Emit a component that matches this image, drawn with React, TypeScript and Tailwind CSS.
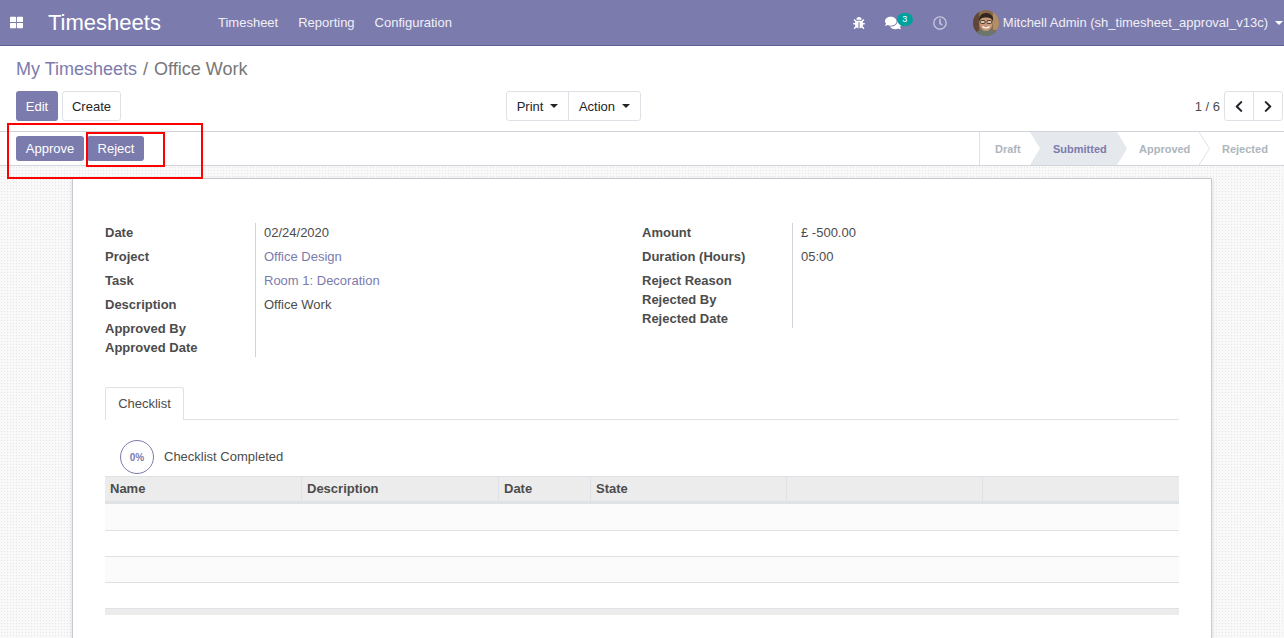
import React from "react";
import { FaBug, FaComments, FaThLarge, FaChevronLeft, FaChevronRight, FaRegClock } from "react-icons/fa";

const Avatar = () => (
  <svg width="26" height="26" viewBox="0 0 26 26" className="shrink-0">
    <defs>
      <clipPath id="av"><circle cx="13" cy="13" r="13" /></clipPath>
    </defs>
    <g clipPath="url(#av)">
      <rect width="26" height="26" fill="#8a6a4c" />
      <rect x="0" y="0" width="6" height="26" fill="#5f4636" />
      <rect x="20" y="0" width="6" height="20" fill="#b08f68" />
      <path d="M2 26c1-5 5-7 11-7s10 2 11 7z" fill="#6b766c" />
      <ellipse cx="13" cy="13.500" rx="6.500" ry="7.500" fill="#c99878" />
      <path d="M6 11c-.5-5 3-8 7-8s8 2.500 7 8c-1.500-2.500-3-3.500-7-3.500s-5.500 1-7 3.500z" fill="#33261f" />
      <rect x="7.500" y="10.500" width="4.500" height="3" rx="1" fill="#e2c3ae" stroke="#2c2420" strokeWidth="0.8" />
      <rect x="14" y="10.500" width="4.500" height="3" rx="1" fill="#e2c3ae" stroke="#2c2420" strokeWidth="0.8" />
      <path d="M9.500 16.500c2 1.800 5 1.800 7 0" stroke="#fff" strokeWidth="1.200" fill="none" />
    </g>
  </svg>
);

const Caret = ({ cls }: { cls: string }) => (
  <span className={`inline-block w-0 h-0 border-x-[4px] border-x-transparent border-t-[4px] ${cls}`} />
);

const Cols = ["w-[197px]", "w-[197px]", "w-[92px]", "w-[196px]", "w-[196px]", "flex-1"];

const leftLabels: [string, string][] = [
  ["Date", "h-[24px]"],
  ["Project", "h-[24px]"],
  ["Task", "h-[24px]"],
  ["Description", "h-[24px]"],
  ["Approved By", "h-[19px]"],
  ["Approved Date", "h-[19px]"],
];
const rightLabels: [string, string][] = [
  ["Amount", "h-[24px]"],
  ["Duration (Hours)", "h-[24px]"],
  ["Reject Reason", "h-[19px]"],
  ["Rejected By", "h-[19px]"],
  ["Rejected Date", "h-[19px]"],
];

export default function App() {
  return (
    <div className="relative w-[1284px] h-[638px] overflow-hidden bg-white text-[13px] text-[#4c4c4c] font-['Liberation_Sans',Arial,sans-serif]">
      {/* navbar */}
      <header className="h-[46px] bg-[#7c7bad] border-b border-[#5f5e97] flex items-center text-white">
        <FaThLarge className="ml-[10px] w-[13px] h-[13px]" />
        <div className="ml-[25px] text-[22px] leading-none w-[170px]">Timesheets</div>
        <nav className="flex gap-[20px] text-[#f0eff6]">
          <span>Timesheet</span>
          <span>Reporting</span>
          <span>Configuration</span>
        </nav>
        <div className="ml-auto flex items-center">
          <FaBug className="w-[12px] h-[12px] mr-[20px]" />
          <div className="relative mr-[32px]">
            <FaComments className="w-[16px] h-[16px]" />
            <span className="absolute left-[12px] -top-[2px] w-[16px] h-[13px] rounded-full bg-[#00a09d] text-[9px] leading-[13px] text-center">3</span>
          </div>
          <FaRegClock className="w-[14px] h-[14px] text-[#c9c8de] mr-[26px]" />
          <Avatar />
          <span className="ml-[4px] text-[#f0eff6]">Mitchell Admin (sh_timesheet_approval_v13c)</span>
          <Caret cls="ml-[7px] mr-[1px] border-t-white" />
        </div>
      </header>

      {/* control panel */}
      <div className="h-[85px] px-[16px] pt-[11px]">
        <div className="text-[18px] leading-[24px] text-[#777]">
          <span className="text-[#7c7bad]">My Timesheets</span>
          <span className="mx-[6px]">/</span>
          <span>Office Work</span>
        </div>
        <div className="mt-[10px] flex items-center">
          <div className="flex gap-[4px] w-[490px]">
            <button className="h-[30px] w-[42px] pt-[1px] rounded-[3px] bg-[#7c7bad] text-white">Edit</button>
            <button className="h-[30px] w-[59px] pt-[1px] rounded-[3px] bg-white border border-[#dee2e6] text-[#212529]">Create</button>
          </div>
          <div className="flex h-[30px] border border-[#dee2e6] rounded-[3px] text-[#212529]">
            <button className="w-[62px] pt-[1px] flex items-center justify-center gap-[7px] border-r border-[#dee2e6]">Print <Caret cls="mb-[2px] border-t-[#212529]" /></button>
            <button className="w-[71px] pt-[1px] flex items-center justify-center gap-[7px]">Action <Caret cls="mb-[2px] border-t-[#212529]" /></button>
          </div>
          <div className="flex flex-1 items-center justify-end -mr-[15px]">
            <span className="mr-[4px] pt-[1px] text-[#4c4c4c]">1 / 6</span>
            <div className="flex h-[30px] border border-[#dee2e6] rounded-[3px] text-[#212529]">
              <button className="w-[29px] flex items-center justify-center border-r border-[#dee2e6]"><FaChevronLeft className="w-[12px] h-[13px]" /></button>
              <button className="w-[28px] flex items-center justify-center"><FaChevronRight className="w-[12px] h-[13px]" /></button>
            </div>
          </div>
        </div>
      </div>

      {/* status bar */}
      <div className="h-[35px] border-y border-[#ced4da] flex items-center justify-between pl-[16px]">
        <div className="flex gap-[3px]">
          <button className="h-[25px] w-[68px] rounded-[3px] bg-[#7c7bad] text-white">Approve</button>
          <button className="h-[25px] w-[57px] pl-[1px] rounded-[3px] bg-[#7c7bad] text-white">Reject</button>
        </div>
        <div className="flex h-full text-[11px] font-bold text-[#adb5bd] border-l border-[#dee2e6]">
          <div className="w-[50px] pl-[15px] pt-[1px] flex items-center">Draft</div>
          <div className="relative w-[87px] pl-[23px] pt-[1px] flex items-center text-[#7c7bad]">
            <svg className="absolute left-0 top-0" width="97" height="33" viewBox="0 0 97 33">
              <path d="M0 0H87L97 16.500L87 33H0L10 16.500Z" fill="#e5e8ec" />
            </svg>
            <span className="relative">Submitted</span>
          </div>
          <div className="relative w-[82px] pl-[22px] pt-[1px] flex items-center">
            <svg className="absolute left-[82px] top-0" width="11" height="33" viewBox="0 0 11 33">
              <path d="M0 0L10.500 16.500L0 33" fill="none" stroke="#dee2e6" />
            </svg>
            <span className="relative">Approved</span>
          </div>
          <div className="w-[85px] pl-[23px] pt-[1px] flex items-center">Rejected</div>
        </div>
      </div>

      {/* content */}
      <main className="h-[472px] px-[72px] pt-[12px] bg-[#f9f9f9] bg-[radial-gradient(#e4e4e4_0.6px,transparent_0.6px)] bg-[length:3px_3px]">
        <div className="w-[1140px] h-[470px] bg-white border border-[#c8c8d0] shadow-[0_1px_4px_rgba(0,0,0,0.12)] pt-[44px] px-[32px]">
          <div className="flex">
            <div className="w-[537px] flex">
              <div className="w-[151px] border-r border-[#ced4da] font-bold leading-[19px]">
                {leftLabels.map(([t, h]) => <div key={t} className={h}>{t}</div>)}
              </div>
              <div className="pl-[8px] leading-[19px]">
                <div className="h-[24px]">02/24/2020</div>
                <div className="h-[24px] text-[#7c7bad]">Office Design</div>
                <div className="h-[24px] text-[#7c7bad]">Room 1: Decoration</div>
                <div className="h-[24px]">Office Work</div>
              </div>
            </div>
            <div className="flex self-start">
              <div className="w-[151px] border-r border-[#ced4da] font-bold leading-[19px]">
                {rightLabels.map(([t, h]) => <div key={t} className={h}>{t}</div>)}
              </div>
              <div className="pl-[8px] leading-[19px]">
                <div className="h-[24px]">£ -500.00</div>
                <div className="h-[24px]">05:00</div>
              </div>
            </div>
          </div>

          {/* tabs */}
          <div className="mt-[30px] h-[33px] border-b border-[#dee2e6] flex">
            <div className="w-[79px] h-[33px] bg-white border border-b-0 border-[#dee2e6] rounded-t-[3px] flex items-center justify-center">Checklist</div>
          </div>

          <div className="h-[56px] flex items-center pl-[15px] pt-[20px] pb-[2px]">
            <div className="w-[34px] h-[34px] rounded-full border border-[#7c7bad] flex items-center justify-center text-[10px] font-bold text-[#7c7bad]">0%</div>
            <span className="ml-[10px]">Checklist Completed</span>
          </div>

          {/* table */}
          <div className="h-[28px] flex bg-[#ececec] border-t border-[#dee2e6] border-b-[3px] border-b-[#dee2e6] font-bold">
            {["Name", "Description", "Date", "State", "", ""].map((h, i) => (
              <div key={i} className={`${Cols[i]} ${i < 5 ? "border-r border-[#dee2e6]" : ""} pl-[5px] flex items-center`}>{h}</div>
            ))}
          </div>
          <div className="h-[27px] bg-[#fbfbfb] border-b border-[#dee2e6]" />
          <div className="h-[26px] bg-white border-b border-[#dee2e6]" />
          <div className="h-[26px] bg-[#fbfbfb] border-b border-[#dee2e6]" />
          <div className="h-[26px] bg-white border-b border-[#dee2e6]" />
          <div className="h-[6px] bg-[#ececec]" />
        </div>
      </main>

      {/* red annotation boxes */}
      <div className="absolute left-[7px] top-[123px] w-[196px] h-[56px] border-2 border-[#ff0000]" />
      <div className="absolute left-[86px] top-[132px] w-[79px] h-[35px] border-2 border-[#ff0000]" />
    </div>
  );
}
